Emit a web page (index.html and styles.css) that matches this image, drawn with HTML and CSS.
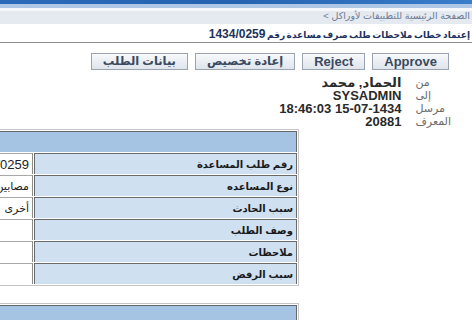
FILE: index.html
```html
<!DOCTYPE html>
<html lang="ar" dir="rtl">
<head>
<meta charset="utf-8">
<title>إعتماد خطاب ملاحظات</title>
<link rel="stylesheet" href="styles.css">
</head>
<body>
<header class="topbar">
  <div class="bar-dark"></div>
  <div class="bar-light"></div>
  <div class="crumbs"><a class="crumb-link">الصفحة الرئيسية للتطبيقات لأوراكل</a> &gt;</div>
</header>
<h1 class="title">إعتماد خطاب ملاحظات طلب صرف مساعدة رقم <span class="num">1434/0259</span></h1>
<div class="actions">
  <button class="btn">Approve</button>
  <button class="btn">Reject</button>
  <button class="btn ar">إعادة تخصيص</button>
  <button class="btn ar">بيانات الطلب</button>
</div>
<div class="info">
  <div class="lbl">من</div><div class="val">الحماد, محمد</div>
  <div class="lbl">إلى</div><div class="val">SYSADMIN</div>
  <div class="lbl">مرسل</div><div class="val">15-07-1434 18:46:03</div>
  <div class="lbl">المعرف</div><div class="val">20881</div>
</div>
<div class="clip">
  <table class="grid">
    <tr><td class="head" colspan="2"></td></tr>
    <tr><td class="label">رقم طلب المساعدة</td><td class="value">1434/0259</td></tr>
    <tr><td class="label">نوع المساعده</td><td class="value ar">مصابين</td></tr>
    <tr><td class="label">سبب الحادث</td><td class="value ar">أخرى</td></tr>
    <tr><td class="label">وصف الطلب</td><td class="value"></td></tr>
    <tr><td class="label">ملاحظات</td><td class="value"></td></tr>
    <tr><td class="label">سبب الرفض</td><td class="value"></td></tr>
  </table>
</div>
<div class="clip second">
  <table class="grid">
    <tr><td class="head" colspan="2"></td></tr>
  </table>
</div>
</body>
</html>
```
FILE: styles.css
```css
html, body {
  margin: 0;
  padding: 0;
  background: #ffffff;
}
body {
  font-family: "Liberation Sans", "DejaVu Sans", sans-serif;
  color: #222;
  overflow: hidden;
}
.topbar {
  display: flex;
  flex-direction: column;
}
.bar-dark {
  height: 4px;
  background: linear-gradient(90deg, #2a6ab8, #2563b0 50%, #3a7dca);
}
.bar-light {
  height: 4px;
  background: #aec7e6;
}
.crumbs {
  height: 16px;
  line-height: 15px;
  padding-right: 2px;
  font-size: 9.5px;
  color: #6a7c96;
  background: linear-gradient(#f5f7fb 0, #f5f7fb 3px, #e5e9f0 3px, #e5e9f0 100%);
}
.crumb-link {
  color: #6a7c96;
}
.title {
  margin: 0;
  padding: 2px 2px 0 0;
  height: 16px;
  line-height: 16px;
  font-size: 9px;
  word-spacing: -1px;
  font-weight: bold;
  color: #1d3260;
  border-bottom: 1px solid #8f8f8f;
  white-space: nowrap;
}
.title .num {
  font-size: 12px;
  word-spacing: 0;
}
.actions {
  display: flex;
  gap: 7px;
  margin: 10px 23px 0 0;
}
.btn {
  flex-shrink: 0;
  height: 17px;
  padding: 0 11px;
  border: 1px solid #9aa4b1;
  border-radius: 0;
  background: linear-gradient(#f7f9fb, #dfe5ec);
  color: #3a495d;
  font-family: "Liberation Sans", "DejaVu Sans", sans-serif;
  font-size: 13px;
  font-weight: bold;
  line-height: 15px;
}
.btn.ar {
  font-size: 11.5px;
}
.info {
  display: grid;
  grid-template-columns: auto auto;
  justify-content: start;
  column-gap: 14px;
  margin: 6px 21px 0 0;
  line-height: 13px;
}
.lbl {
  text-align: left;
  font-size: 11px;
  color: #6b6b6b;
}
.val {
  text-align: right;
  font-size: 13px;
  font-weight: bold;
  color: #2a2a2a;
}
.clip {
  display: flex;
  justify-content: flex-start;
  margin: 1px 173px 0 0;
  overflow: hidden;
}
.clip.second {
  margin-top: 17px;
}
.grid {
  flex-shrink: 0;
  width: 406px;
  border: 1px solid #c6c6c6;
  border-spacing: 1px;
  border-collapse: separate;
}
.grid td {
  height: 20px;
  padding: 0 3px;
  white-space: nowrap;
}
.head {
  background: #a5c3e2;
  border-top: 1px solid #666;
  border-right: 1px solid #666;
}
.label {
  width: 255px;
  background: #cfe0f1;
  border-top: 1px solid #6a6a6a;
  border-right: 1px solid #6a6a6a;
  border-left: 1px solid #6a6a6a;
  font-size: 10px;
  font-weight: bold;
  color: #1a1a1a;
  text-align: right;
}
.value {
  width: 130px;
  background: #ffffff;
  border-top: 1px solid #a8a8a8;
  border-right: 1px solid #8a8a8a;
  border-left: 1px solid #a8a8a8;
  font-size: 13px;
  color: #222;
  text-align: right;
}
.value.ar {
  font-size: 11px;
}
```
